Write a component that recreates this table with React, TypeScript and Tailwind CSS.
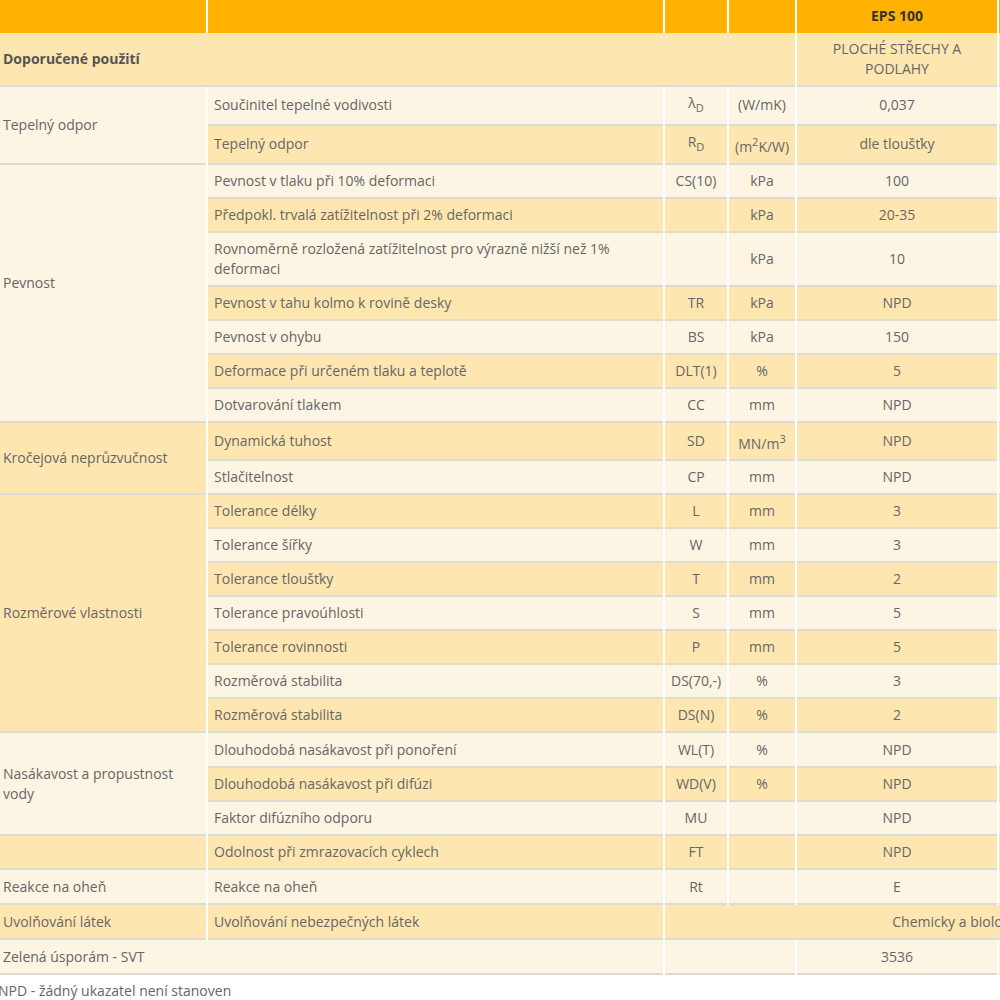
import type { ReactNode } from 'react'

const L = 'bg-[#fdf5e4]'
const D = 'bg-[#fee6b1]'

interface CellProps {
  bg: string
  children?: ReactNode
  center?: boolean
  colSpan?: number
  rowSpan?: number
  bold?: boolean
  pad?: string
}

function Td({ bg, children, center, colSpan, rowSpan, bold, pad = 'py-[6px]' }: CellProps) {
  return (
    <td
      colSpan={colSpan}
      rowSpan={rowSpan}
      className={`${bg} ${center ? 'text-center' : 'text-left'} ${bold ? 'font-bold text-[#555]' : ''} ${pad} border-b-2 border-[#dedbd3] px-[6px] align-middle leading-[20px]`}
    >
      {children}
    </td>
  )
}

interface Item {
  name: string
  sym?: ReactNode
  unit?: ReactNode
  value: string
  bg: string
  tall?: boolean
}

function ItemCells({ item }: { item: Item }) {
  const pad = item.tall ? 'pt-[7px] pb-[6px]' : 'py-[6px]'
  return (
    <>
      <Td bg={item.bg} pad={pad}>{item.name}</Td>
      <Td bg={item.bg} pad={pad} center>{item.sym}</Td>
      <Td bg={item.bg} pad={pad} center>{item.unit}</Td>
      <Td bg={item.bg} pad={pad} center>{item.value}</Td>
      <Td bg={item.bg} pad={pad} />
    </>
  )
}

const sub = (s: string) => <span className="align-sub text-[11px]">{s}</span>
const sup = (s: string) => <span className="align-super text-[11px]">{s}</span>

const groups: { title: string; bg: string; pad?: string; items: Item[] }[] = [
  {
    title: 'Tepelný odpor',
    bg: L,
    items: [
      { name: 'Součinitel tepelné vodivosti', sym: <>λ{sub('D')}</>, unit: '(W/mK)', value: '0,037', bg: L },
      { name: 'Tepelný odpor', sym: <>R{sub('D')}</>, unit: <>(m{sup('2')}K/W)</>, value: 'dle tloušťky', bg: D },
    ],
  },
  {
    title: 'Pevnost',
    bg: L,
    pad: 'pt-[6px] pb-[26px]',
    items: [
      { name: 'Pevnost v tlaku při 10% deformaci', sym: 'CS(10)', unit: 'kPa', value: '100', bg: L },
      { name: 'Předpokl. trvalá zatížitelnost při 2% deformaci', unit: 'kPa', value: '20-35', bg: D },
      { name: 'Rovnoměrně rozložená zatížitelnost pro výrazně nižší než 1% deformaci', unit: 'kPa', value: '10', bg: L },
      { name: 'Pevnost v tahu kolmo k rovině desky', sym: 'TR', unit: 'kPa', value: 'NPD', bg: D },
      { name: 'Pevnost v ohybu', sym: 'BS', unit: 'kPa', value: '150', bg: L },
      { name: 'Deformace při určeném tlaku a teplotě', sym: 'DLT(1)', unit: '%', value: '5', bg: D },
      { name: 'Dotvarování tlakem', sym: 'CC', unit: 'mm', value: 'NPD', bg: L },
    ],
  },
  {
    title: 'Kročejová neprůzvučnost',
    bg: D,
    items: [
      { name: 'Dynamická tuhost', sym: 'SD', unit: <>MN/m{sup('3')}</>, value: 'NPD', bg: D },
      { name: 'Stlačitelnost', sym: 'CP', unit: 'mm', value: 'NPD', bg: L },
    ],
  },
  {
    title: 'Rozměrové vlastnosti',
    bg: D,
    items: [
      { name: 'Tolerance délky', sym: 'L', unit: 'mm', value: '3', bg: D },
      { name: 'Tolerance šířky', sym: 'W', unit: 'mm', value: '3', bg: L },
      { name: 'Tolerance tloušťky', sym: 'T', unit: 'mm', value: '2', bg: D },
      { name: 'Tolerance pravoúhlosti', sym: 'S', unit: 'mm', value: '5', bg: L },
      { name: 'Tolerance rovinnosti', sym: 'P', unit: 'mm', value: '5', bg: D },
      { name: 'Rozměrová stabilita', sym: 'DS(70,-)', unit: '%', value: '3', bg: L },
      { name: 'Rozměrová stabilita', sym: 'DS(N)', unit: '%', value: '2', bg: D },
    ],
  },
  {
    title: 'Nasákavost a propustnost vody',
    bg: L,
    items: [
      { name: 'Dlouhodobá nasákavost při ponoření', sym: 'WL(T)', unit: '%', value: 'NPD', bg: L, tall: true },
      { name: 'Dlouhodobá nasákavost při difúzi', sym: 'WD(V)', unit: '%', value: 'NPD', bg: D },
      { name: 'Faktor difúzního odporu', sym: 'MU', value: 'NPD', bg: L },
    ],
  },
  {
    title: '',
    bg: D,
    items: [{ name: 'Odolnost při zmrazovacích cyklech', sym: 'FT', value: 'NPD', bg: D }],
  },
  {
    title: 'Reakce na oheň',
    bg: L,
    items: [{ name: 'Reakce na oheň', sym: 'Rt', value: 'E', bg: L, tall: true }],
  },
]

export default function App() {
  const tall = 'pt-[7px] pb-[6px]'
  return (
    <div
      className="w-[1000px] overflow-hidden bg-white text-[14px] text-[#666]"
      style={{ fontFamily: '"Open Sans", "Noto Sans", sans-serif' }}
    >
      <div className="-ml-[5px] w-[1332px]">
        <table className="table-fixed w-[1332px] border-separate border-spacing-x-[2px] border-spacing-y-0">
          <colgroup>
            <col className="w-[209px]" />
            <col className="w-[455px]" />
            <col className="w-[62px]" />
            <col className="w-[66px]" />
            <col className="w-[200px]" />
            <col className="w-[326px]" />
          </colgroup>
          <thead>
            <tr className="h-[33px]">
              <th className="bg-[#ffb300]" />
              <th className="bg-[#ffb300]" />
              <th className="bg-[#ffb300]" />
              <th className="bg-[#ffb300]" />
              <th className="bg-[#ffb300] pb-[2px] text-center font-bold text-[#333] leading-[20px]">EPS 100</th>
              <th className="bg-[#ffb300]" />
            </tr>
          </thead>
          <tbody>
            <tr>
              <Td bg={D} colSpan={4} bold>Doporučené použití</Td>
              <Td bg={D} center>PLOCHÉ STŘECHY A PODLAHY</Td>
              <Td bg={D} />
            </tr>
            {groups.map((g) =>
              g.items.map((item, i) => (
                <tr key={g.title + item.name + i}>
                  {i === 0 && (
                    <Td bg={g.bg} rowSpan={g.items.length} pad={g.pad}>
                      {g.title}
                    </Td>
                  )}
                  <ItemCells item={item} />
                </tr>
              ))
            )}
            <tr>
              <Td bg={D} pad={tall}>Uvolňování látek</Td>
              <Td bg={D} pad={tall}>Uvolňování nebezpečných látek</Td>
              <Td bg={D} pad={tall} colSpan={4} center>Chemicky a biologicky neutrální</Td>
            </tr>
            <tr>
              <Td bg={L} pad={tall} colSpan={2}>Zelená úsporám - SVT</Td>
              <Td bg={L} pad={tall} colSpan={2} />
              <Td bg={L} pad={tall} center>3536</Td>
              <Td bg={L} pad={tall} />
            </tr>
          </tbody>
        </table>
        <p className="mt-[6px] pl-[3px] leading-[20px]">NPD - žádný ukazatel není stanoven</p>
      </div>
    </div>
  )
}
